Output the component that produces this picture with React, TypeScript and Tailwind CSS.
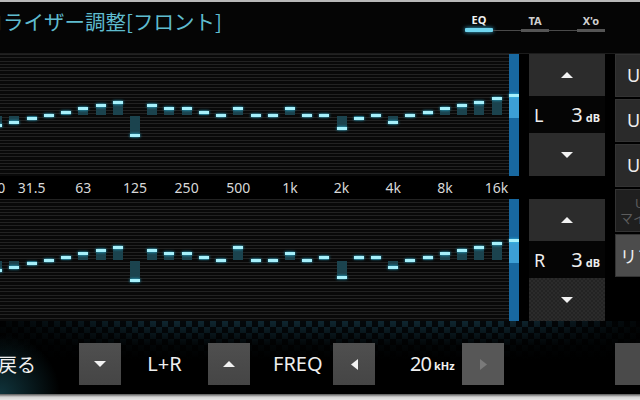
import React from 'react';

const LEFT = [-3, -2, -1, 0, 1, 2, 3, 4, -6, 3, 2, 2, 1, 0, 2, 0, 0, 2, 0, 0, -4, -1, 0, -2, 0, 1, 2, 3, 4, 5, 6];
const RIGHT = [-3, -2, -1, 0, 1, 2, 3, 4, -6, 3, 2, 2, 1, 0, 4, 0, 0, 2, 0, 1, -5, 1, 1, -2, 0, 1, 2, 3, 4, 5, 6];
const LABELS = ['20', '', '31.5', '', '', '63', '', '', '125', '', '', '250', '', '', '500', '', '', '1k', '', '', '2k', '', '', '4k', '', '', '8k', '', '', '16k', ''];

const BASE = 61.5;
const STEP = 3.33;

function Tri({ dir, color = '#f2f2f2' }: { dir: 'up' | 'down' | 'left' | 'right'; color?: string }) {
  if (dir === 'up' || dir === 'down') {
    return (
      <svg width="12" height="6" viewBox="0 0 12 6">
        <polygon points={dir === 'up' ? '0,6 6,0 12,6' : '0,0 12,0 6,6'} fill={color} />
      </svg>
    );
  }
  return (
    <svg width="7" height="11" viewBox="0 0 7 11">
      <polygon points={dir === 'left' ? '7,0 7,11 0,5.5' : '0,0 0,11 7,5.5'} fill={color} />
    </svg>
  );
}

function Band({ value, selected }: { value: number; selected: boolean }) {
  const y = BASE - value * STEP;
  const top = Math.min(y, BASE);
  const height = Math.abs(y - BASE);
  return (
    <div className="relative h-full w-[17.23px] shrink-0">
      {selected && (
        <div className="absolute inset-y-0 left-1/2 w-[10px] -translate-x-1/2 bg-[#1868a0]" />
      )}
      <div
        className={`absolute left-1/2 w-[10px] -translate-x-1/2 ${selected ? 'bg-[#3c9fd6]' : 'bg-[#1b434e]'}`}
        style={{ top, height: selected ? height + 3 : height }}
      />
      <div
        className="absolute left-1/2 h-[3px] w-[10px] -translate-x-1/2 bg-[#a6f0fb] shadow-[0_0_3px_#2fc4ea]"
        style={{ top: y - 1.5 }}
      />
    </div>
  );
}

function Graph({ values }: { values: number[] }) {
  return (
    <div className="relative h-[122px] overflow-hidden bg-[repeating-linear-gradient(to_bottom,#222222_0px,#222222_1px,#090909_1px,#090909_3.3px)]">
      <div className="ml-[-11.4px] flex h-full">
        {values.map((v, i) => (
          <Band key={i} value={v} selected={i === values.length - 1} />
        ))}
      </div>
    </div>
  );
}

function Labels() {
  return (
    <div className="h-[23px] overflow-hidden bg-black">
      <div className="ml-[-11.4px] flex h-full">
        {LABELS.map((l, i) => (
          <div key={i} className="flex w-[17.23px] shrink-0 justify-center whitespace-nowrap text-[14px] leading-[23px] text-[#d8d8d8]">
            {l}
          </div>
        ))}
      </div>
    </div>
  );
}

function LevelControl({ ch, textured }: { ch: string; textured?: boolean }) {
  return (
    <div className="flex h-[122px] flex-col">
      <div className="flex h-[42px] items-center justify-center bg-[#2c2c2c]">
        <Tri dir="up" />
      </div>
      <div className="flex h-[37px] items-center justify-between bg-[#050505] pl-[5px] pr-[5px]">
        <span className="text-[18px] leading-none text-[#eeeeee]">{ch}</span>
        <span className="flex items-baseline text-[#eeeeee]">
          <span className="text-[20px] leading-none tracking-[-1px]">3</span>
          <span className="ml-[4px] text-[11px] font-bold leading-none">dB</span>
        </span>
      </div>
      <div
        className={`flex h-[43px] items-center justify-center ${
          textured
            ? 'bg-[#262626] [background-image:repeating-conic-gradient(#2b2b2b_0%_25%,#232323_0%_50%)] [background-size:4px_4px]'
            : 'bg-[#2c2c2c]'
        }`}
      >
        <Tri dir="down" />
      </div>
    </div>
  );
}

function Tabs() {
  const tabs = ['EQ', 'TA', "X'o"];
  return (
    <div className="mr-[35px] mt-[12px] flex items-end">
      {tabs.map((t, i) => (
        <React.Fragment key={t}>
          {i > 0 && <div className="mb-[1px] h-px w-[28px] bg-[#4a4a4a]" />}
          <div className="flex w-[28px] flex-col items-center">
            <span className={`text-[11px] font-bold leading-[12px] ${i === 0 ? 'text-[#f0f0f0]' : 'text-[#cfcfcf]'}`}>{t}</span>
            <div
              className={`mt-[2px] w-full ${
                i === 0 ? 'h-[4px] rounded-[1px] bg-[#6fd6ef] shadow-[0_0_4px_#3fb8e0]' : 'h-[3px] bg-[#555555]'
              }`}
            />
          </div>
        </React.Fragment>
      ))}
    </div>
  );
}

function SideButton({ children, tone = 'normal', pad = 'pl-[11px]' }: { children: React.ReactNode; tone?: 'normal' | 'dim' | 'light'; pad?: string }) {
  const bg = tone === 'light' ? 'bg-[#4c4c4c]' : tone === 'dim' ? 'bg-[#1f1f1f]' : 'bg-[#2a2a2a]';
  return (
    <div className={`flex h-[43px] items-center whitespace-nowrap border border-[#333333] ${pad} ${bg}`}>
      {children}
    </div>
  );
}

function FooterButton({ children, light }: { children: React.ReactNode; light?: boolean }) {
  return (
    <div
      className={`flex h-[42px] w-[42px] shrink-0 items-center justify-center ${
        light ? 'bg-[#575757]' : 'bg-[linear-gradient(to_bottom,#4f4f4f,#454545)]'
      }`}
    >
      {children}
    </div>
  );
}

export default function App() {
  return (
    <div className="flex h-[400px] w-[640px] flex-col overflow-hidden bg-black font-['Noto_Sans','Noto_Sans_CJK_JP',sans-serif] text-white">
      <div className="h-[2px] shrink-0 bg-[#b8b8b8]" />

      <header className="flex h-[52px] shrink-0 items-start justify-between border-b border-[#1c1c1c] bg-[#050505]">
        <h1 className="ml-[-38px] mt-[5px] whitespace-nowrap font-['Noto_Sans_CJK_JP',sans-serif] text-[20.5px] leading-[28px] text-[#5fbccf]">
          イコライザー調整[フロント]
        </h1>
        <Tabs />
      </header>

      <div className="flex h-[267px] shrink-0">
        <div className="flex w-[519px] shrink-0 flex-col">
          <Graph values={LEFT} />
          <Labels />
          <Graph values={RIGHT} />
        </div>

        <div className="ml-[10px] flex w-[76px] shrink-0 flex-col gap-[23px]">
          <LevelControl ch="L" />
          <LevelControl ch="R" textured />
        </div>

        <div className="ml-[10px] flex w-[80px] shrink-0 flex-col gap-[2px]">
          <SideButton>
            <span className="text-[18px] text-[#eeeeee]">User1</span>
          </SideButton>
          <SideButton>
            <span className="text-[18px] text-[#eeeeee]">User2</span>
          </SideButton>
          <SideButton>
            <span className="text-[18px] text-[#eeeeee]">User3</span>
          </SideButton>
          <SideButton tone="dim" pad="pl-[4px]">
            <div className="flex flex-col text-[13px] leading-[15px] text-[#5c5c5c]">
              <span className="pl-[15px]">U</span>
              <span>マイセット</span>
            </div>
          </SideButton>
          <SideButton tone="light" pad="pl-[4px]">
            <span className="font-['Noto_Sans_CJK_JP',sans-serif] text-[17px] text-[#f0f0f0]">リファレンス</span>
          </SideButton>
        </div>
      </div>

      <footer className="flex h-[73px] shrink-0 items-start pt-[22px] [background:radial-gradient(circle_at_0%_100%,rgba(40,130,150,0.4),rgba(0,0,0,0)_60px),linear-gradient(to_bottom,rgba(0,0,0,0)_0px,rgba(0,0,0,0.85)_24px,#000_38px),linear-gradient(to_right,rgba(0,0,0,0.85)_0%,rgba(0,0,0,0)_25%,rgba(0,0,0,0)_80%,rgba(0,0,0,0.85)_100%),repeating-conic-gradient(#0f2630_0%_25%,#04080b_0%_50%)_0_0/12px_12px]">
        <div className="flex h-[42px] w-[79px] shrink-0 items-center">
          <span className="ml-[-2px] font-['Noto_Sans_CJK_JP',sans-serif] text-[19px] text-[#f0f0f0]">戻る</span>
        </div>
        <FooterButton>
          <Tri dir="down" />
        </FooterButton>
        <div className="flex h-[42px] w-[87px] shrink-0 items-center justify-center text-[20px] text-[#eeeeee]">L+R</div>
        <FooterButton>
          <Tri dir="up" />
        </FooterButton>
        <div className="flex h-[42px] w-[83px] shrink-0 items-center pl-[23px] text-[20px] text-[#eeeeee]">FREQ</div>
        <FooterButton>
          <Tri dir="left" />
        </FooterButton>
        <div className="flex h-[42px] w-[87px] shrink-0 items-center pl-[35px] text-[#f0f0f0]">
          <span className="text-[20px] tracking-[-1px]">20</span>
          <span className="ml-[3px] mt-[4px] text-[11px] font-bold">kHz</span>
        </div>
        <FooterButton light>
          <Tri dir="right" color="#7a7a7a" />
        </FooterButton>
        <div className="ml-auto h-[42px] w-[25px] shrink-0 bg-[#4a4a4a]" />
      </footer>

      <div className="h-[6px] shrink-0 bg-[linear-gradient(to_bottom,#555555,#d4d4d4_50%,#e6e6e6)]" />
    </div>
  );
}
